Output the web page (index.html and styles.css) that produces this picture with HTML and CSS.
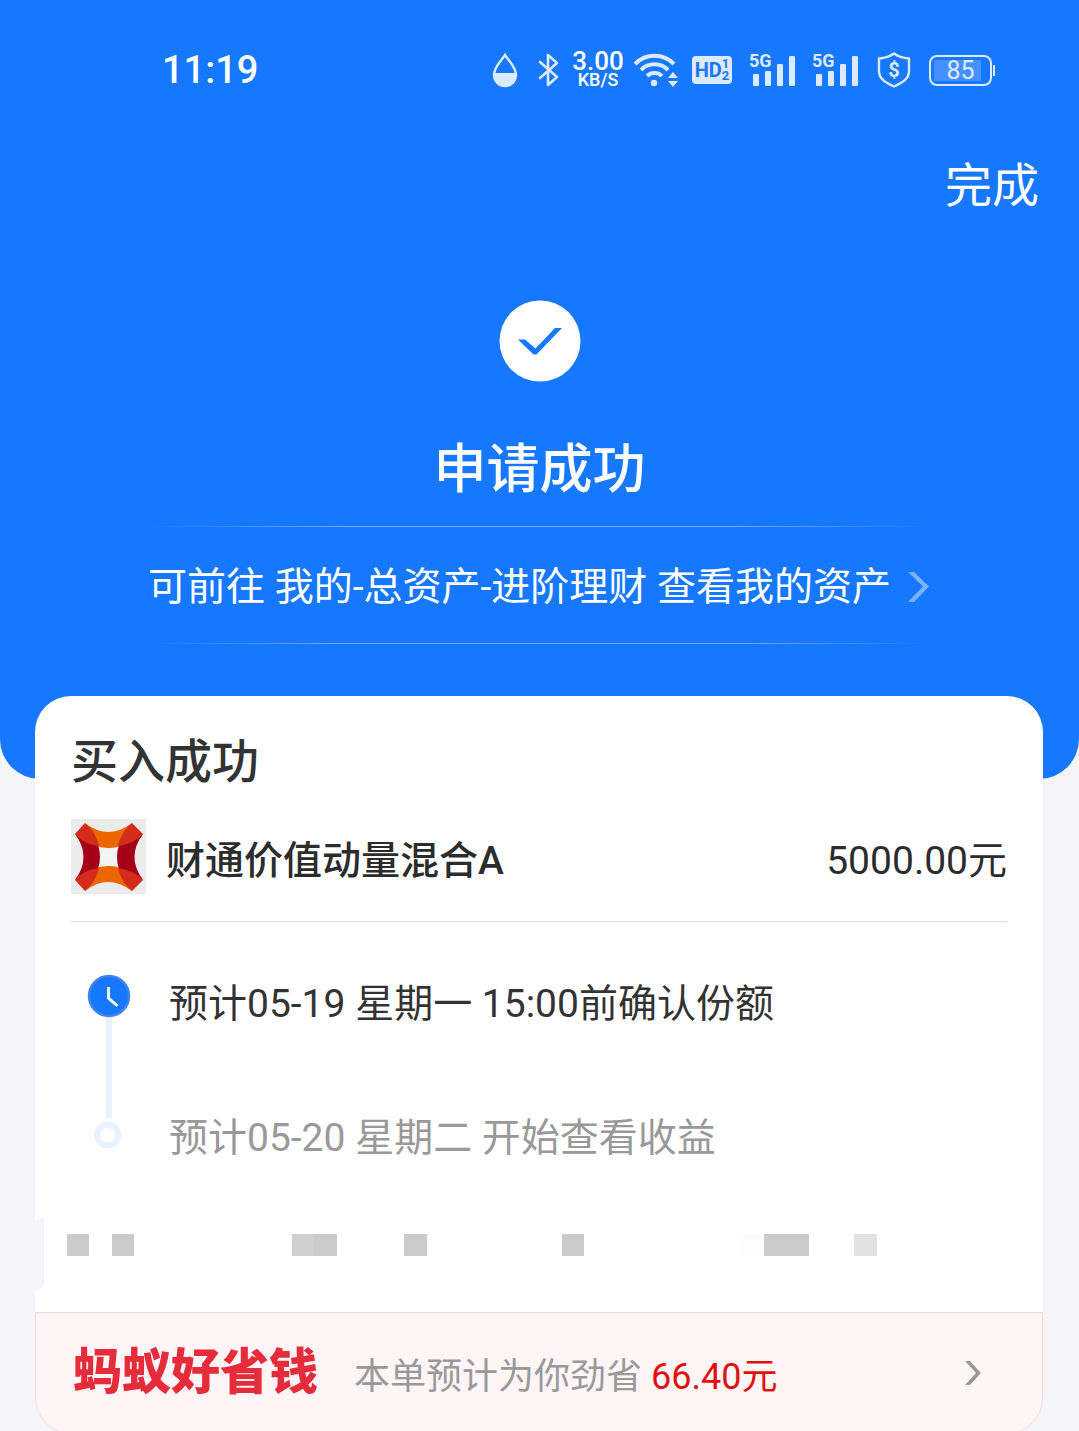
FILE: index.html
```html
<!DOCTYPE html>
<html lang="zh-CN">
  <head>
    <meta charset="UTF-8" />
    <meta name="viewport" content="width=device-width, initial-scale=1.0" />
    <title>申请成功</title>
    <link rel="stylesheet" href="styles.css">
  </head>
  <body>
    <header class="hero">
      <div class="statusbar">
        <span class="time">11:19</span>
        <div class="status-icons">
          <svg class="drop" width="26" height="36" viewBox="0 0 26 36">
            <path d="M13 3C9 9 2 15 2 23a11 11 0 0 0 22 0C24 15 17 9 13 3z" fill="none" stroke="currentColor" stroke-width="2.4" />
            <path d="M2 21h22c1 7-4 13-11 13S1 28 2 21z" fill="currentColor" />
          </svg>
          <svg class="bluetooth" width="22" height="36" viewBox="0 0 22 36">
            <path d="M2 10l17 15-9 8V3l9 8L2 26" fill="none" stroke="currentColor" stroke-width="2.6" stroke-linejoin="round" stroke-linecap="round" />
          </svg>
          <div class="speed">
            <span class="speed-num">3.00</span>
            <span class="speed-unit">KB/S</span>
          </div>
          <svg class="wifi" width="45" height="36" viewBox="0 0 45 36">
            <g fill="none" stroke="currentColor" stroke-width="4">
              <path d="M1 12a27 27 0 0 1 39 0" />
              <path d="M7 18a19 19 0 0 1 27 0" />
              <path d="M13 24a11 11 0 0 1 15 0" />
            </g>
            <circle cx="20" cy="31" r="3.2" fill="currentColor" />
            <path d="M39 20l5 6H34zM39 35l5-6H34z" fill="currentColor" />
          </svg>
          <div class="hd">
            <span>HD</span>
            <span class="hd-nums"><span>1</span><span>2</span></span>
          </div>
          <div class="signal">
            <span class="signal-label">5G</span>
            <svg width="48" height="36" viewBox="0 0 48 36" fill="currentColor">
              <rect x="4" y="22" width="6" height="12" rx="1" />
              <rect x="16" y="19" width="6" height="15" rx="1" />
              <rect x="28" y="12" width="6" height="22" rx="1" />
              <rect x="40" y="4" width="6" height="30" rx="1" />
            </svg>
          </div>
          <div class="signal">
            <span class="signal-label">5G</span>
            <svg width="48" height="36" viewBox="0 0 48 36" fill="currentColor">
              <rect x="4" y="22" width="6" height="12" rx="1" />
              <rect x="16" y="19" width="6" height="15" rx="1" />
              <rect x="28" y="12" width="6" height="22" rx="1" />
              <rect x="40" y="4" width="6" height="30" rx="1" />
            </svg>
          </div>
          <div class="shield">
            <svg width="34" height="36" viewBox="0 0 34 36">
              <path d="M17 1.500c4 3 9 4.500 15 5V19c0 8-7 12-15 15.500C9 31 2 27 2 19V6.500c6-.5 11-2 15-5z" fill="none" stroke="currentColor" stroke-width="2.400" stroke-linejoin="round" />
            </svg>
            <span>$</span>
          </div>
          <div class="battery"><span>85</span></div>
        </div>
      </div>

      <div class="topbar">
        <button class="done">完成</button>
      </div>

      <svg class="check" width="82" height="82" viewBox="0 0 82 82">
        <circle cx="41" cy="41" r="40.500" fill="#fff" />
        <path d="M19 39.500h7l10.500 9L56 28h7L37.500 54.500h-3z" fill="#1677ff" />
      </svg>
      <h1>申请成功</h1>
      <a class="assets-link" href="#">
        <span>可前往 我的-总资产-进阶理财 查看我的资产</span>
        <svg width="24" height="32" viewBox="0 0 24 32">
          <path d="M1 1h6l15 14.500L7 31H1l15-15.500z" fill="currentColor" />
        </svg>
      </a>
    </header>

    <main class="card">
      <section class="order">
        <h2>买入成功</h2>
        <div class="fund">
          <svg class="fund-logo" width="75" height="75" viewBox="0 0 75 75">
            <rect width="75" height="75" fill="#ececec" />
            <path d="M14 4q23 18 47 0L50 27q-12 4-25 0zM14 72q23-18 47 0L50 49q-12-4-25 0z" fill="#eb6500" />
            <path d="M4 15q17 23 0 46l23-11q4-12 0-24zM72 15q-17 23 0 46L48 50q-4-12 0-24z" fill="#a50018" />
            <path d="M14 4q11 9 14 23Q12 25 4 15zM61 4Q50 13 47 27q16-2 25-12zM14 72q11-9 14-23-16 2-24 12zM61 72Q50 63 47 49q16 2 25 12z" fill="#d42c1a" />
            <path d="M29 29q8 1 17 0-1 9 0 18-9-1-17 0 1-9 0-18z" fill="#f3f3f3" />
          </svg>
          <span class="fund-name">财通价值动量混合A</span>
          <span class="amount">5000.00元</span>
        </div>
        <ol class="steps">
          <li class="step current">
            <svg width="44" height="44" viewBox="0 0 44 44">
              <circle cx="22" cy="22" r="20" fill="#1677ff" stroke="#3f84ee" stroke-width="2.500" />
              <path d="M21.500 13v11l9 8" fill="none" stroke="#fff" stroke-width="3" />
            </svg>
            <span>预计05-19 星期一 15:00前确认份额</span>
          </li>
          <li class="step">
            <svg width="44" height="44" viewBox="0 0 44 44">
              <circle cx="20.500" cy="21" r="10.500" fill="#fff" stroke="#e7f1ff" stroke-width="6" />
            </svg>
            <span>预计05-20 星期二 开始查看收益</span>
          </li>
        </ol>
      </section>

      <div class="masked">
        <span class="notch"></span>
        <svg width="812" height="22" viewBox="0 0 812 22">
          <path d="M0 0h22v22H0zM45 0h22v22H45zM247 0h23v22h-23zM337 0h23v22h-23zM495 0h22v22h-22zM697 0h45v22h-45z" fill="#cbcbcb" />
          <path d="M225 0h22v22h-22z" fill="#d0d0d0" />
          <path d="M675 0h22v22h-22z" fill="#fcfcfc" />
          <path d="M787 0h23v22h-23z" fill="#e2e2e2" />
        </svg>
      </div>

      <a class="saving" href="#">
        <strong class="brand">蚂蚁好省钱</strong>
        <span class="saving-text">本单预计为你劲省 <em>66.40元</em></span>
        <svg width="18" height="26" viewBox="0 0 18 26">
          <path d="M1 1h5l11 12L6 25H1l11-12z" fill="#999" />
        </svg>
      </a>
    </main>
  </body>
</html>
```

FILE: styles.css
```css
* {
  margin: 0;
  padding: 0;
  box-sizing: border-box;
}
body {
  font-family: Roboto, "Noto Sans CJK SC", sans-serif;
  background-color: #f4f4f9;
  color: #333;
}
a {
  color: inherit;
  text-decoration: none;
}
svg {
  display: block;
  flex-shrink: 0;
}

/* blue header */
.hero {
  display: flex;
  flex-direction: column;
  align-items: center;
  padding-bottom: 135px;
  background-color: #1677ff;
  color: #fff;
  border-radius: 0 0 40px 40px;
}
.statusbar {
  display: flex;
  justify-content: space-between;
  align-items: center;
  width: 100%;
  padding: 48px 87px 0 162px;
}
.time {
  font-size: 38px;
  line-height: 44px;
  font-weight: 500;
}
.status-icons {
  display: flex;
  align-items: center;
  color: #dceaff;
}
.bluetooth {
  margin-left: 20px;
}
.speed {
  display: flex;
  flex-direction: column;
  align-items: center;
  width: 52px;
  margin-left: 12px;
  color: #fff;
  font-weight: 500;
}
.speed-num {
  font-size: 26px;
  line-height: 20px;
}
.speed-unit {
  font-size: 18px;
  line-height: 18px;
}
.wifi {
  margin-left: 10px;
}
.hd {
  display: flex;
  justify-content: center;
  align-items: center;
  width: 40px;
  height: 28px;
  margin-left: 13px;
  border-radius: 4px;
  background-color: #dceaff;
  color: #1677ff;
  font-size: 20px;
  font-weight: 700;
}
.hd-nums {
  display: flex;
  flex-direction: column;
  font-size: 13px;
  line-height: 12px;
}
.signal {
  position: relative;
  margin-left: 17px;
}
.signal + .signal {
  margin-left: 15px;
}
.signal-label {
  position: absolute;
  top: 0;
  left: 0;
  font-size: 18px;
  line-height: 18px;
  font-weight: 700;
}
.shield {
  position: relative;
  margin-left: 17px;
}
.shield span {
  position: absolute;
  inset: 0;
  text-align: center;
  font-size: 20px;
  line-height: 36px;
  font-weight: 700;
}
.battery {
  position: relative;
  width: 63px;
  height: 31px;
  margin-left: 18px;
  padding: 3px;
  border: 2px solid #dceaff;
  border-radius: 8px;
}
.battery span {
  display: block;
  background: linear-gradient(to right, #458fff 88%, transparent 88%);
  text-align: center;
  font-size: 25px;
  line-height: 21px;
}
.battery::after {
  content: "";
  position: absolute;
  top: 8px;
  right: -5px;
  width: 2px;
  height: 11px;
  background-color: #dceaff;
}
.topbar {
  display: flex;
  justify-content: flex-end;
  width: 100%;
  padding: 60px 40px 0;
}
.done {
  border: none;
  background: none;
  color: #fff;
  font-family: inherit;
  font-size: 47px;
  line-height: 68px;
  cursor: pointer;
}
.check {
  margin-top: 80px;
}
h1 {
  margin-top: 48px;
  font-size: 53px;
  line-height: 80px;
  font-weight: 500;
}
.assets-link {
  display: flex;
  align-items: center;
  gap: 16px;
  margin-top: 16px;
  height: 118px;
  font-size: 39px;
  white-space: nowrap;
  background:
    linear-gradient(to right, transparent, #73adff 25%, #73adff 75%, transparent) top / 100% 1px no-repeat,
    linear-gradient(to right, transparent, #73adff 25%, #73adff 75%, transparent) bottom / 100% 1px no-repeat;
}
.assets-link span {
  padding-bottom: 4px;
}
.assets-link svg {
  margin-top: 4px;
  color: #7db2ff;
}

/* order card */
.card {
  margin: -83px 36px 0 35px;
  background-color: #fff;
  border-radius: 36px;
}
.order {
  padding: 32px 36px 0;
}
h2 {
  font-size: 47px;
  line-height: 68px;
  font-weight: 500;
}
.fund {
  display: flex;
  align-items: center;
  padding: 23px 0 27px;
  border-bottom: 1px solid #ddd;
  font-size: 39px;
  color: #2c2c2c;
}
.fund-name {
  margin-left: 20px;
  font-weight: 500;
}
.amount {
  margin-left: auto;
}
.steps {
  list-style: none;
  padding: 48px 0 45px 16px;
  background: linear-gradient(#e7f1ff, #e7f1ff) 35px 96px / 6px 100px no-repeat;
}
.step {
  display: flex;
  align-items: flex-start;
  color: #999;
  font-size: 39px;
}
.step span {
  margin-left: 38px;
  line-height: 68px;
}
.step svg {
  margin-top: 10px;
}
.step.current {
  height: 134px;
  color: #333;
}
.step.current svg {
  margin-top: 4px;
}

/* hidden order details */
.masked {
  display: flex;
  align-items: flex-start;
  height: 95px;
}
.masked svg {
  margin: 17px 0 0 23px;
}
.notch {
  width: 9px;
  height: 75px;
  background-color: #f4f4f9;
  clip-path: polygon(0 4px, 100% 0, 100% 69px, 0 100%);
}

.saving {
  display: flex;
  align-items: center;
  height: 122px;
  padding: 0 60px 0 37px;
  background-color: #fff5f6;
  border: 1px solid #f5d9da;
  border-radius: 0 0 36px 36px;
}
.brand {
  color: #e62c3b;
  font-size: 49px;
  line-height: 68px;
  font-weight: 900;
}
.saving-text {
  margin-left: 36px;
  color: #999;
  font-size: 36px;
}
.saving-text em {
  color: #e01010;
  font-style: normal;
}
.saving svg {
  margin-left: auto;
}
```
